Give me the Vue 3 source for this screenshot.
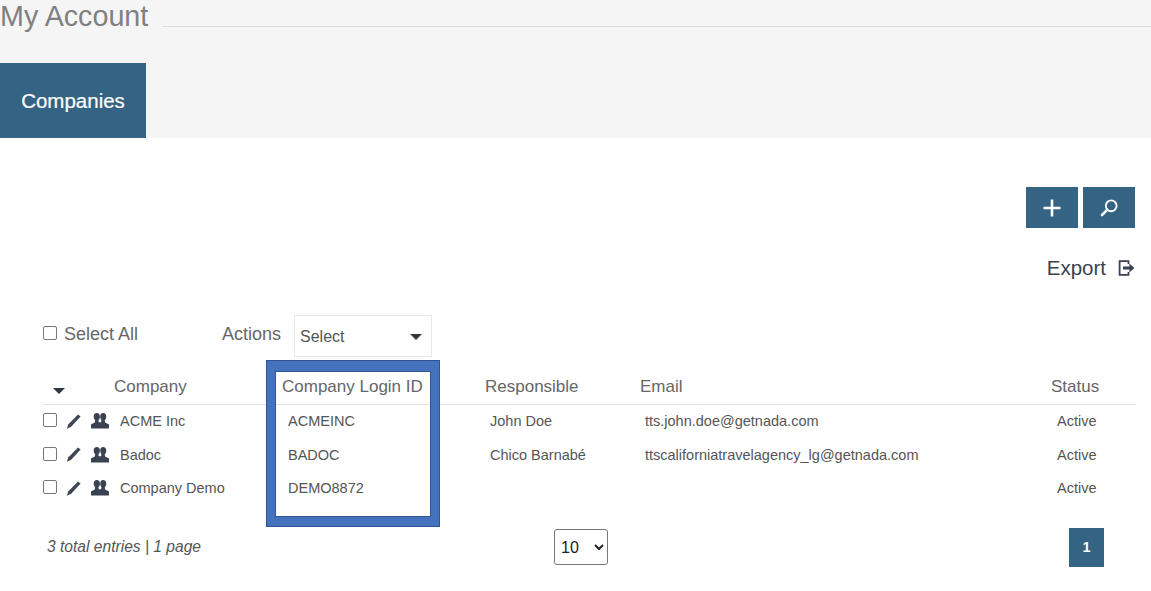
<script setup>
const rows = [
  { name: 'ACME Inc', login: 'ACMEINC', resp: 'John Doe', email: 'tts.john.doe@getnada.com', status: 'Active' },
  { name: 'Badoc', login: 'BADOC', resp: 'Chico Barnabé', email: 'ttscaliforniatravelagency_lg@getnada.com', status: 'Active' },
  { name: 'Company Demo', login: 'DEMO8872', resp: '', email: '', status: 'Active' }
]
</script>

<template>
  <div class="page">
    <header class="head">
      <div class="title-row">
        <h1 class="title">My Account</h1>
        <div class="title-line"></div>
      </div>
      <div class="tab">Companies</div>
    </header>

    <main class="content">
      <div class="tools">
        <button class="tool" aria-label="Add">
          <svg width="18" height="18" viewBox="0 0 18 18"><path d="M9 .5v17M.5 9h17" stroke="#fff" stroke-width="2.6" fill="none"/></svg>
        </button>
        <button class="tool" aria-label="Search">
          <svg width="20" height="20" viewBox="0 0 20 20"><circle cx="12.2" cy="7.8" r="5.4" stroke="#fff" stroke-width="1.9" fill="none"/><path d="M8.2 11.8 3 17" stroke="#fff" stroke-width="2.6" stroke-linecap="round"/></svg>
        </button>
      </div>

      <div class="export">
        <span>Export</span>
        <svg width="18" height="18" viewBox="0 0 18 18"><path d="M11.5 5V2.2H2.6v13.6h8.9V13" stroke="#3a4150" stroke-width="1.8" fill="none"/><path d="M6 7.6h6.4V4.6l5 4.4-5 4.4v-3H6z" fill="#3a4150"/></svg>
      </div>

      <div class="bulk">
        <label class="select-all"><span class="check"></span><span>Select All</span></label>
        <span class="actions-label">Actions</span>
        <div class="fake-select"><span>Select</span><i class="caret"></i></div>
      </div>

      <div class="table-wrap">
        <div class="highlight"></div>
        <table class="table">
          <colgroup>
            <col class="c-tools"><col class="c-name"><col class="c-login"><col class="c-resp"><col class="c-mail"><col class="c-status">
          </colgroup>
          <thead>
            <tr>
              <th class="sort-cell"><i class="caret sort"></i></th>
              <th class="th-name">Company</th>
              <th class="th-login">Company Login ID</th>
              <th class="th-shift">Responsible</th>
              <th class="th-shift">Email</th>
              <th class="th-shift">Status</th>
            </tr>
          </thead>
          <tbody>
            <tr v-for="r in rows" :key="r.login">
              <td class="row-tools">
                <span class="check"></span>
                <svg class="pencil" width="15" height="15" viewBox="0 0 15 15"><path d="M12 .4 14.6 2.6 5.2 12.8.8 14.8 2.4 10.2z" fill="#3f4653"/></svg>
                <svg class="people" width="18" height="16" viewBox="0 0 18 16"><ellipse cx="5.8" cy="3.8" rx="3.1" ry="3.7" fill="#3a4150"/><ellipse cx="12.2" cy="3.8" rx="3" ry="3.7" fill="#3a4150"/><path d="M4.2 7h3.2l.4 2.2h2.3l.4-2.2h3.2l.4 2.4L18 11.4V15.500H0v-4L3.8 9.400z" fill="#3a4150"/></svg>
              </td>
              <td class="td-name">{{ r.name }}</td>
              <td class="td-login">{{ r.login }}</td>
              <td>{{ r.resp }}</td>
              <td>{{ r.email }}</td>
              <td class="td-status">{{ r.status }}</td>
            </tr>
          </tbody>
        </table>
      </div>

      <footer class="foot">
        <em class="total">3 total entries | 1 page</em>
        <select class="per-page"><option>10</option></select>
        <div class="pager">1</div>
      </footer>
    </main>
  </div>
</template>

<style scoped>
.page {
  width: 1151px;
  height: 591px;
  overflow: hidden;
  background: #fff;
  font-family: "Liberation Sans", Arial, sans-serif;
  color: #555;
}
.head {
  background: #f5f5f5;
  height: 138px;
  display: flex;
  flex-direction: column;
}
.title-row {
  display: flex;
  align-items: flex-start;
  height: 63px;
  gap: 14px;
}
.title {
  margin: 0;
  font-size: 28.7px;
  line-height: 33px;
  font-weight: 400;
  color: #808080;
  white-space: nowrap;
}
.title-line {
  flex: 1;
  margin-top: 26px;
  border-top: 1px solid #dedede;
}
.tab {
  width: 146px;
  height: 75px;
  background: #356383;
  color: #fff;
  font-size: 20.5px;
  -webkit-text-stroke: 0.2px #fff;
  display: flex;
  align-items: center;
  justify-content: center;
}
.content {
  padding: 49px 15px 0 42px;
}
.tools {
  display: flex;
  justify-content: flex-end;
  gap: 5px;
  padding-right: 1px;
}
.tool {
  width: 52px;
  height: 41px;
  border: 0;
  padding: 0;
  background: #356383;
  display: flex;
  align-items: center;
  justify-content: center;
}
.export {
  display: flex;
  justify-content: flex-end;
  align-items: center;
  gap: 10px;
  margin-top: 28px;
  padding-right: 1px;
  height: 24px;
  font-size: 20.5px;
  color: #3a4150;
}
.export span {
  margin-right: 1px;
}
.bulk {
  display: flex;
  align-items: center;
  margin-top: 35px;
  height: 42px;
  font-size: 18px;
  color: #666;
}
.select-all {
  display: flex;
  align-items: center;
  gap: 7px;
  width: 180px;
  margin-top: -3px;
}
.actions-label {
  width: 72px;
  margin-top: -3px;
}
.check {
  display: inline-block;
  width: 12px;
  height: 12px;
  margin-left: 1px;
  border: 1px solid #777;
  border-radius: 2px;
  background: #fff;
  flex: none;
  box-sizing: content-box;
}
.select-all .check {
  position: relative;
  top: -2px;
}
.fake-select {
  width: 138px;
  height: 42px;
  box-sizing: border-box;
  border: 1px solid #e8e8e8;
  display: flex;
  align-items: center;
  justify-content: space-between;
  padding: 2px 9px 0 5px;
  font-size: 16px;
  color: #555;
}
.caret {
  display: inline-block;
  width: 0;
  height: 0;
  border-left: 6px solid transparent;
  border-right: 6px solid transparent;
  border-top: 6px solid #2f3642;
}
.table-wrap {
  position: relative;
  margin-top: 10px;
}
.highlight {
  position: absolute;
  left: 224px;
  top: -7px;
  width: 174px;
  height: 167px;
  box-sizing: border-box;
  border-style: solid;
  border-color: #4472bc;
  border-width: 11px 9px 10px 9px;
  outline: 1px solid #2f5597;
  outline-offset: -1px;
  box-shadow: inset 0 0 0 1px #2f5597;
  pointer-events: none;
}
.table {
  width: 1094px;
  border-collapse: collapse;
  table-layout: fixed;
}
.c-tools { width: 72px; }
.c-name { width: 168px; }
.c-login { width: 202px; }
.c-resp { width: 155px; }
.c-mail { width: 411px; }
th {
  height: 34px;
  padding: 3px 0 0;
  text-align: left;
  font-weight: 400;
  font-size: 17px;
  color: #666;
  border-bottom: 1px solid #e3e3e3;
  white-space: nowrap;
}
td {
  height: 32.4px;
  padding: 0 0 1px 6px;
  font-size: 14.5px;
  color: #555;
  white-space: nowrap;
}
.sort-cell { padding-left: 11px; }
.sort { position: relative; top: 2px; }
.th-shift { padding-left: 1px; }
.td-status { padding-left: 7px; }
td.row-tools {
  padding: 0;
}
.row-tools > * {
  vertical-align: middle;
}
.row-tools .check {
  position: relative;
  top: -2px;
}
.pencil {
  margin-left: 9px;
  position: relative;
  top: -1px;
}
.people {
  margin-left: 10px;
  position: relative;
  top: -1px;
}
.foot {
  display: flex;
  align-items: center;
  margin-top: 24px;
  height: 36px;
}
.total {
  width: 512px;
  padding-left: 5px;
  box-sizing: border-box;
  font-size: 15.6px;
  color: #555;
}
.per-page {
  width: 54px;
  height: 36px;
  box-sizing: border-box;
  background: #fff;
  border: 1px solid #777;
  border-radius: 3px;
  font-family: inherit;
  font-size: 16px;
  color: #222;
  padding-left: 2px;
}
.pager {
  margin-left: auto;
  margin-right: 32px;
  width: 35px;
  height: 39px;
  background: #356383;
  color: #fff;
  font-weight: 700;
  font-size: 14.5px;
  display: flex;
  align-items: center;
  justify-content: center;
}
</style>
